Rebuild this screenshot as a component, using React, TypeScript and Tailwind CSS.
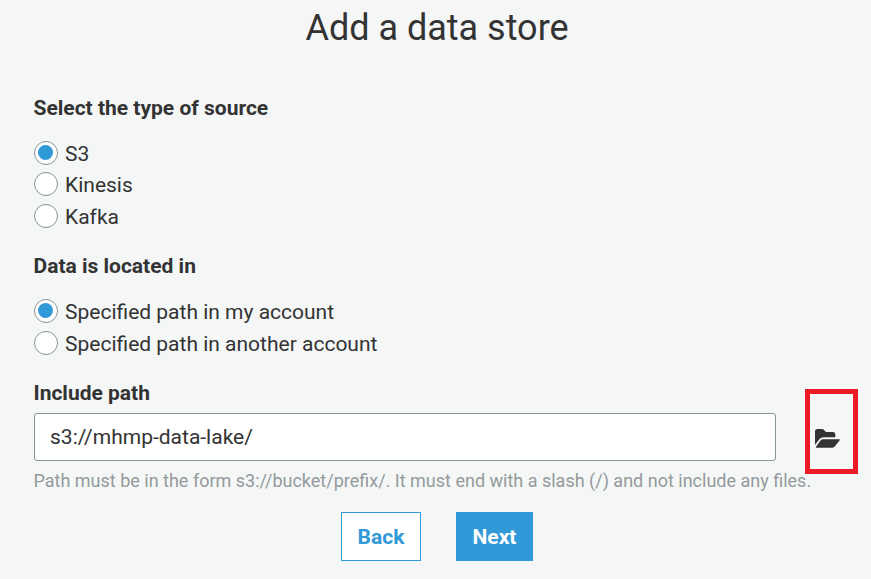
import React from "react";

function FolderOpenIcon() {
  return (
    <svg viewBox="0 0 75 56" className="h-[18.67px] w-[25px]" fill="currentColor" aria-hidden="true">
      <path d="M0 7Q0 0 7 0H21Q27 0 29 5Q31 9 36 9H54Q61 9 61 16V25H26Q17 25 13 31L0 48Z" />
      <path d="M25 31H73Q76 31 74 34L60 52Q57 56 52 56H5Q1 56 3 53L16 35Q19 31 25 31Z" />
    </svg>
  );
}

function Radio({ label, checked = false, spacing = "" }: { label: string; checked?: boolean; spacing?: string }) {
  return (
    <label className={`flex h-6 items-center ${spacing}`}>
      <span className="flex h-6 w-6 shrink-0 items-center justify-start rounded-full border border-[#879596] bg-white pl-[3px]">
        {checked && <span className="mb-px h-[15px] w-[15px] rounded-full bg-[#3099d8]" />}
      </span>
      <span className="ml-[7px] pt-px whitespace-nowrap text-[21px] leading-6">{label}</span>
    </label>
  );
}

export default function App() {
  return (
    <main className="h-[579px] w-[871px] overflow-hidden bg-[#f5f7f7] pl-[34px] font-['Roboto',sans-serif] text-[#333]">
      <h1 className="-ml-[34px] h-[94px] pt-[6px] pl-[3px] text-center text-[36px] leading-[44px] font-normal">Add a data store</h1>
      <h2 className="-ml-[0.5px] h-[47px] pt-[2px] text-[21px] leading-6 font-bold">Select the type of source</h2>
      <Radio label="S3" checked />
      <Radio label="Kinesis" spacing="mt-[7px]" />
      <Radio label="Kafka" spacing="mt-2" />
      <h2 className="mt-[26px] -ml-[0.5px] h-[45px] text-[21px] leading-6 font-bold">Data is located in</h2>
      <Radio label="Specified path in my account" checked />
      <Radio label="Specified path in another account" spacing="mt-2" />
      <h2 className="mt-[26px] -ml-[0.5px] h-8 text-[21px] leading-6 font-bold">Include path</h2>
      <div className="flex h-12">
        <input aria-label="Include path" defaultValue="s3://mhmp-data-lake/" className="h-12 w-[742px] rounded-[3px] border border-[#879596] bg-white px-[15px] text-[21px] outline-none" />
        <button className="-mt-6 ml-[29px] flex h-[85px] w-[53px] shrink-0 items-start border-[5px] border-[#ed1c24] pt-[35.3px] pl-[4.7px]" aria-label="Browse">
          <FolderOpenIcon />
        </button>
      </div>
      <p className="mt-2 -ml-[0.5px] whitespace-nowrap text-[18px] leading-6 text-[#949a9c]">Path must be in the form s3://bucket/prefix/. It must end with a slash (/) and not include any files.</p>
      <div className="mt-[19px] ml-[307px] flex gap-[35px] text-[21px] font-bold">
        <button className="h-[49px] w-20 border border-[#3099d8] bg-white pt-0.5 text-[#3099d8]">Back</button>
        <button className="h-[49px] w-[77px] bg-[#3099d8] pt-0.5 text-white">Next</button>
      </div>
    </main>
  );
}
